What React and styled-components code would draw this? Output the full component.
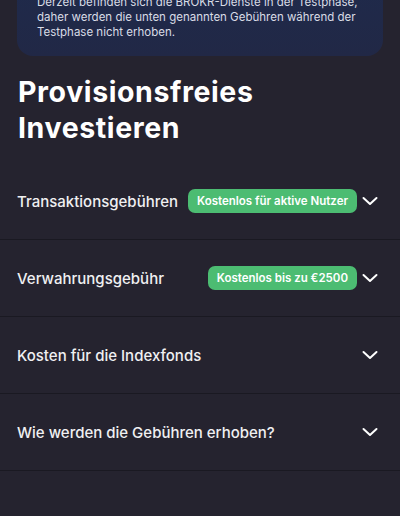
import React from "react";
import styled, { createGlobalStyle } from "styled-components";

const GlobalStyle = createGlobalStyle`
  html, body {
    margin: 0;
    padding: 0;
    background: #25232f;
    overflow: hidden;
  }
  body {
    font-family: Inter, "Noto Sans", sans-serif;
    color: #f2f2f4;
  }
`;

const Page = styled.div`
  display: flex;
  flex-direction: column;
  width: 400px;
  height: 516px;
  overflow: hidden;
`;

const Notice = styled.div`
  margin: -22px 17px 0;
  padding: 17px 20px 16px;
  border-radius: 16px;
  background: linear-gradient(180deg, #1f2a4b 0%, #212846 100%);
  font-size: 11.5px;
  line-height: 15px;
  color: #d9dce6;
  white-space: nowrap;
`;

const Title = styled.h1`
  margin: 18px 0 0;
  padding: 0 18px;
  font-size: 28.5px;
  line-height: 36px;
  font-weight: 700;
  color: #ffffff;
  letter-spacing: 0.6px;
`;

const List = styled.div`
  display: flex;
  flex-direction: column;
  margin-top: 17px;
`;

const Row = styled.div`
  display: flex;
  align-items: center;
  height: 76px;
  padding: 0 22px 0 17px;
  border-bottom: 1px solid #1a1922;
  gap: 5px;
`;

const Label = styled.span`
  flex: 1;
  min-width: 0;
  font-size: 15px;
  font-weight: 500;
  color: #f0f0f2;
  white-space: nowrap;
`;

const Badge = styled.span`
  display: inline-flex;
  flex: none;
  align-items: center;
  height: 24px;
  padding: 0 9px;
  border-radius: 7px;
  background: #4cbc72;
  color: #ffffff;
  font-size: 11.5px;
  font-weight: 600;
  white-space: nowrap;
`;

const Chevron = styled.svg`
  width: 16px;
  height: 16px;
  flex: none;
`;

const ChevronIcon = () => (
  <Chevron viewBox="0 0 16 16" fill="none">
    <path d="M1.5 5 L8 11 L14.5 5" stroke="#ffffff" strokeWidth="2" strokeLinecap="round" strokeLinejoin="round" />
  </Chevron>
);

const rows = [
  { label: "Transaktionsgebühren", badge: "Kostenlos für aktive Nutzer" },
  { label: "Verwahrungsgebühr", badge: "Kostenlos bis zu €2500" },
  { label: "Kosten für die Indexfonds" },
  { label: "Wie werden die Gebühren erhoben?" },
];

export default function App() {
  return (
    <Page>
      <GlobalStyle />
      <Notice>
        Derzeit befinden sich die BROKR-Dienste in der Testphase,
        <br />
        daher werden die unten genannten Gebühren während der
        <br />
        Testphase nicht erhoben.
      </Notice>
      <Title>
        Provisionsfreies
        <br />
        Investieren
      </Title>
      <List>
        {rows.map((r) => (
          <Row key={r.label}>
            <Label>{r.label}</Label>
            {r.badge && <Badge>{r.badge}</Badge>}
            <ChevronIcon />
          </Row>
        ))}
      </List>
    </Page>
  );
}
